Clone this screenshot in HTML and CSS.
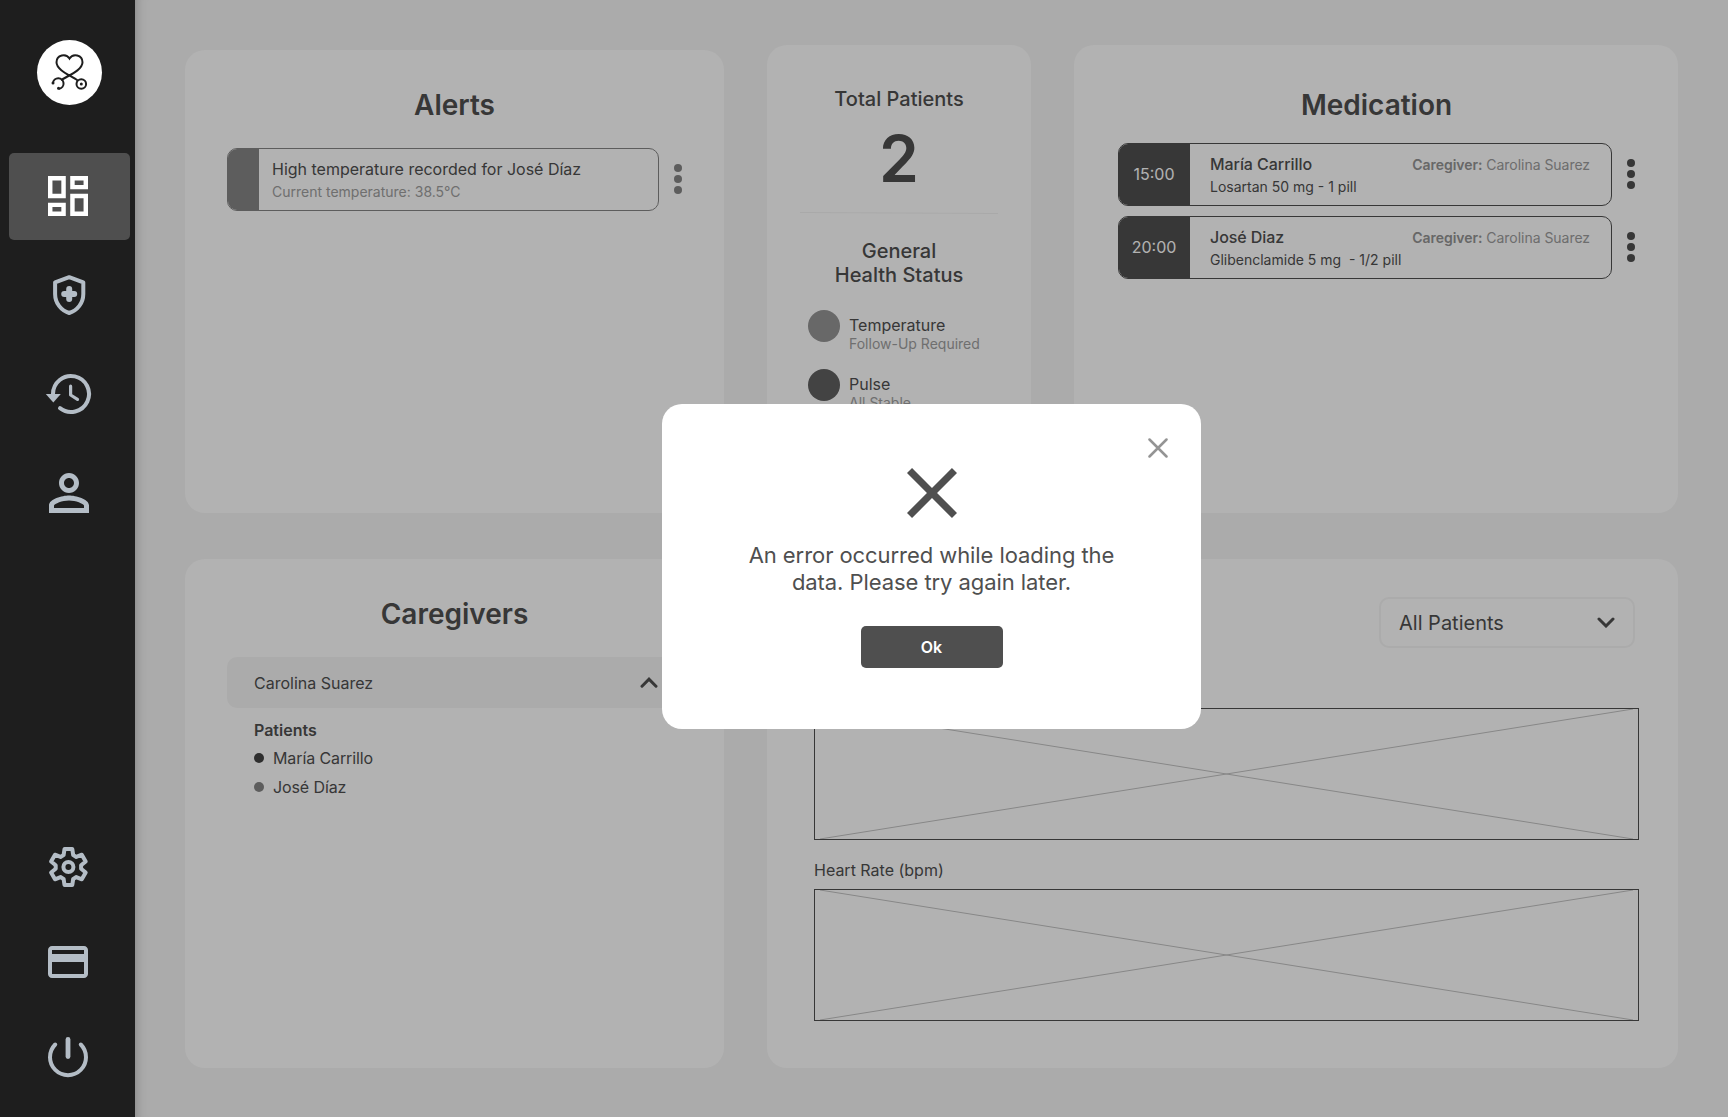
FILE: index.html
```html
<!DOCTYPE html>
<html lang="en">
<head>
<meta charset="utf-8">
<title>Dashboard</title>
<link rel="stylesheet" href="styles.css">
</head>
<body>
<div class="app">
  <aside class="sidebar">
    <div class="logo">
      <svg width="65" height="65" viewBox="0 0 65 65" fill="none" stroke="#1e1e1e" stroke-width="2" stroke-linecap="round">
        <path d="M24.800 39.800 C30 36 45.500 30.500 45.500 22.300 C45.500 14.500 35.800 13 32.500 18.600 C29.200 13 19.500 14.500 19.500 22.300 C19.500 30.500 35 36 40.300 40.200"/>
        <path d="M16 42.800 A5.300 5.300 0 1 1 22.300 48.700"/>
        <circle cx="44.300" cy="44" r="4.800"/>
        <circle cx="44.300" cy="44" r="1.500" fill="#1e1e1e" stroke="none"/>
        <circle cx="16" cy="43" r="1.500" fill="#1e1e1e" stroke="none"/>
        <circle cx="21.500" cy="48.300" r="1.500" fill="#1e1e1e" stroke="none"/>
      </svg>
    </div>
    <nav class="nav nav-main">
      <a class="nav-item active">
        <svg class="nav-icon" viewBox="0 0 50 40"><path transform="translate(4 0) scale(2.2222) translate(-3 -3)" d="M19 5v2h-4V5h4M9 5v6H5V5h4m10 8v6h-4v-6h4M9 17v2H5v-2h4M21 3h-8v6h8V3zM11 3H3v10h8V3zm10 8h-8v10h8V11zm-10 4H3v6h8v-6z"/></svg>
      </a>
      <a class="nav-item">
        <svg class="nav-icon line" viewBox="0 0 50 40"><path d="M25.200 2.200 L39.300 7.300 V19 C39.300 28 33.500 35.300 25.200 38 C16.900 35.300 11.100 28 11.100 19 V7.300 Z"/><path stroke-width="6" d="M25.200 14v10M20.200 19h10"/></svg>
      </a>
      <a class="nav-item">
        <svg class="nav-icon line" viewBox="0 0 50 40"><path d="M9 20 A18 18 0 1 1 16 34.200"/><path stroke-width="3.200" d="M26.600 12.200V21L33.500 25.300"/><path class="solid" d="M1.800 20h15l-7.500 8.500z"/></svg>
      </a>
      <a class="nav-item">
        <svg class="nav-icon" viewBox="0 0 50 40"><path transform="translate(5 0) scale(2.5) translate(-4 -4)" d="M12 6c1.100 0 2 .9 2 2s-.9 2-2 2-2-.9-2-2 .9-2 2-2m0 9c2.700 0 5.800 1.290 6 2v1H6v-.99c.2-.72 3.300-2.010 6-2.010m0-11C9.790 4 8 5.790 8 8s1.790 4 4 4 4-1.790 4-4-1.790-4-4-4zm0 9c-2.670 0-8 1.340-8 4v3h16v-3c0-2.660-5.330-4-8-4z"/></svg>
      </a>
    </nav>
    <nav class="nav nav-foot">
      <a class="nav-item">
        <svg class="nav-icon line" viewBox="-24.400 -20 50 40"><path d="M-4.800-11.900L-3.900-17.900H3.900L4.800-11.900L7.900-10.100L13.400-12.300L17.300-5.500L12.700-1.800V1.800L17.300 5.500L13.400 12.300L7.900 10.100L4.800 11.900L3.900 17.900H-3.900L-4.800 11.900L-7.900 10.100L-13.400 12.300L-17.300 5.500L-12.700 1.800V-1.800L-17.300-5.500L-13.400-12.300L-7.900-10.100Z"/><circle r="5"/></svg>
      </a>
      <a class="nav-item">
        <svg class="nav-icon" viewBox="0 0 50 40"><path transform="translate(4 4) scale(2) translate(-2 -4)" d="M20 4H4c-1.110 0-1.990.89-1.990 2L2 18c0 1.110.89 2 2 2h16c1.110 0 2-.89 2-2V6c0-1.110-.89-2-2-2zm0 14H4v-6h16v6zm0-10H4V6h16v2z"/></svg>
      </a>
      <a class="nav-item">
        <svg class="nav-icon line" viewBox="0 0 50 40"><path d="M11.200 7.500A18 18 0 1 0 36.800 7.500"/><path stroke-width="4.800" d="M24 2.400V19.600"/></svg>
      </a>
    </nav>
  </aside>

  <main class="content">
    <section class="card alerts">
      <h2>Alerts</h2>
      <div class="entry">
        <div class="box grey">
          <div class="tag"></div>
          <div class="box-body">
            <div class="line-main">High temperature recorded for José Díaz</div>
            <div class="line-sub muted">Current temperature: 38.5°C</div>
          </div>
        </div>
        <div class="dots grey"><i></i><i></i><i></i></div>
      </div>
    </section>

    <section class="card summary">
      <h3>Total Patients</h3>
      <div class="total">2</div>
      <svg class="divider" width="198" height="2" viewBox="0 0 198 2"><path d="M0 .5L198 1.500" stroke="#f3f3f3"/></svg>
      <h3>General<br>Health Status</h3>
      <ul class="status">
        <li><span class="status-dot follow"></span><div><div class="status-name">Temperature</div><div class="status-note">Follow-Up Required</div></div></li>
        <li><span class="status-dot stable"></span><div><div class="status-name">Pulse</div><div class="status-note">All Stable</div></div></li>
      </ul>
    </section>

    <section class="card medication">
      <h2>Medication</h2>
      <div class="entry">
        <div class="box">
          <div class="tag">15:00</div>
          <div class="box-body">
            <div class="line-top"><span class="name">María Carrillo</span><span class="caregiver"><b>Caregiver:</b> Carolina Suarez</span></div>
            <div class="line-sub">Losartan 50 mg - 1 pill</div>
          </div>
        </div>
        <div class="dots"><i></i><i></i><i></i></div>
      </div>
      <div class="entry">
        <div class="box">
          <div class="tag">20:00</div>
          <div class="box-body">
            <div class="line-top"><span class="name">José Diaz</span><span class="caregiver"><b>Caregiver:</b> Carolina Suarez</span></div>
            <div class="line-sub">Glibenclamide 5 mg&nbsp; - 1/2 pill</div>
          </div>
        </div>
        <div class="dots"><i></i><i></i><i></i></div>
      </div>
    </section>

    <section class="card caregivers">
      <h2>Caregivers</h2>
      <div class="accordion">
        <span>Carolina Suarez</span>
        <svg class="chevron" width="18" height="11" viewBox="0 0 18 11"><path d="M2 9.200L9 2.200L16 9.200"/></svg>
      </div>
      <div class="patients">
        <h4>Patients</h4>
        <div class="patient"><i class="bullet dark"></i>María Carrillo</div>
        <div class="patient"><i class="bullet"></i>José Díaz</div>
      </div>
    </section>

    <section class="card trends">
      <div class="select">
        <span>All Patients</span>
        <svg class="chevron" width="18" height="11" viewBox="0 0 18 11"><path d="M2 2L9 9L16 2"/></svg>
      </div>
      <svg class="chart" viewBox="0 0 825 132"><path class="cross" d="M6 1L819 131M6 131L819 1"/><rect x=".5" y=".5" width="824" height="131"/></svg>
      <div class="chart-label">Heart Rate (bpm)</div>
      <svg class="chart" viewBox="0 0 825 132"><path class="cross" d="M6 1L819 131M6 131L819 1"/><rect x=".5" y=".5" width="824" height="131"/></svg>
    </section>
  </main>
</div>

<div class="backdrop">
  <div class="modal" role="alertdialog">
    <svg class="close" width="20" height="20" viewBox="0 0 20 20"><path d="M1.500 1.500L18.500 18.500M18.500 1.500L1.500 18.500"/></svg>
    <svg class="error-icon" width="50" height="50" viewBox="0 0 14 14"><path d="M14 1.410L12.590 0L7 5.590L1.410 0L0 1.410L5.590 7L0 12.590L1.410 14L7 8.410L12.590 14L14 12.590L8.410 7z"/></svg>
    <p>An error occurred while loading the<br>data. Please try again later.</p>
    <button>Ok</button>
  </div>
</div>
</body>
</html>
```
FILE: styles.css
```css
* { box-sizing: border-box; }
body {
  margin: 0;
  background: #f5f5f5;
  font-family: Inter, "Liberation Sans", sans-serif;
  font-size: 16px;
  line-height: 20px;
  color: #4f4f4f;
}
h2, h3, h4, p, ul { margin: 0; padding: 0; }
.app { display: flex; width: 1728px; height: 1117px; overflow: hidden; }

.sidebar {
  position: relative;
  z-index: 3;
  width: 135px;
  flex: none;
  display: flex;
  flex-direction: column;
  padding: 40px 5px 16px 9px;
  background: #1e1e1e;
}
.logo {
  width: 65px;
  height: 65px;
  margin-left: 28px;
  border-radius: 50%;
  background: #fff;
}
.logo svg { display: block; }
.nav { display: flex; flex-direction: column; }
.nav-main { margin-top: 48px; gap: 12px; }
.nav-foot { margin-top: auto; gap: 8px; }
.nav-item {
  display: flex;
  align-items: center;
  height: 87px;
  padding: 0 0 1px 35px;
  border-radius: 5px;
  color: #b4bdc6;
}
.nav-item.active { background: #4f4f4f; color: #fff; }
.nav-icon { width: 50px; height: 40px; fill: currentColor; overflow: visible; }
.nav-icon.line {
  fill: none;
  stroke: currentColor;
  stroke-width: 4;
  stroke-linecap: round;
  stroke-linejoin: round;
}
.nav-icon .solid { fill: currentColor; stroke: none; }

.content {
  flex: 1;
  display: grid;
  grid-template-columns: 539px 264px 604px;
  grid-template-rows: 468px 509px;
  gap: 46px 43px;
  padding: 45px 50px 49px;
  box-shadow: inset 12px 0 12px -12px rgba(0, 0, 0, .28);
}
.card { background: #fff; border-radius: 20px; }
h2 {
  font-size: 28px;
  line-height: 34px;
  font-weight: 600;
  text-align: center;
}
h3 { font-size: 20px; line-height: 24px; font-weight: 500; text-align: center; }

.alerts { margin-top: 5px; padding: 38px 42px 0; }
.alerts h2 { margin-bottom: 26px; }
.medication { padding: 43px 43px 0 44px; }
.medication h2 { margin-bottom: 21px; }

.entry { display: flex; align-items: center; }
.entry + .entry { margin-top: 10px; }
.box {
  display: flex;
  height: 63px;
  border: 1px solid #4f4f4f;
  border-radius: 10px;
  overflow: hidden;
}
.box.grey { border-color: #868686; }
.alerts .box { width: 432px; }
.medication .box { width: 494px; }
.tag {
  width: 71px;
  flex: none;
  display: flex;
  align-items: center;
  justify-content: center;
  padding: 0 1px 1px 0;
  background: #4f4f4f;
  color: #fff;
}
.grey .tag { width: 31px; background: #868686; }
.box-body { flex: 1; padding: 10px 21px 0 20px; white-space: nowrap; }
.grey .box-body { padding-left: 13px; }
.line-top { display: flex; justify-content: space-between; align-items: baseline; }
.name { font-weight: 500; letter-spacing: -.06px; }
.line-sub { margin-top: 3px; font-size: 14px; line-height: 18px; }
.grey .line-sub { margin-top: 4px; }
.muted { color: #a0a0a0; }
.caregiver { font-size: 14px; line-height: 20px; letter-spacing: -.04px; color: #9c9c9c; }
.caregiver b { font-weight: 600; color: #949494; }
.dots { display: flex; flex-direction: column; gap: 3.300px; margin: 0 0 1px 15px; }
.dots i { width: 8px; height: 8px; border-radius: 50%; background: #4f4f4f; }
.dots.grey i { background: #868686; }

.summary { display: flex; flex-direction: column; align-items: center; padding-top: 42px; }
.total { margin-top: 9px; font-size: 64px; line-height: 78px; font-weight: 600; }
.divider { margin: 14px 0 25px; }
.status { align-self: stretch; list-style: none; margin-top: 23px; padding-left: 41px; }
.status li { display: flex; gap: 9px; height: 59px; }
.status-dot { width: 32px; height: 32px; border-radius: 50%; }
.follow { background: #959595; }
.stable { background: #616161; }
.status-name { margin-top: 5px; }
.status-note { font-size: 14px; line-height: 18px; color: #a0a0a0; }

.caregivers { padding: 38px 42px 0; }
.caregivers h2 { margin-bottom: 26px; }
.accordion {
  display: flex;
  align-items: center;
  justify-content: space-between;
  height: 51px;
  padding: 0 24px 0 27px;
  border-radius: 10px;
  background: #f5f5f5;
}
.chevron { fill: none; stroke: #4f4f4f; stroke-width: 3; stroke-linecap: round; stroke-linejoin: miter; }
.patients { padding: 12px 0 0 27px; }
h4 { font-size: 16px; line-height: 20px; font-weight: 600; }
.patient { display: flex; align-items: center; gap: 9px; margin-top: 8px; letter-spacing: -.1px; }
.patient + .patient { margin-top: 9px; }
.bullet { width: 10px; height: 10px; border-radius: 50%; background: #868686; }
.bullet.dark { background: #434343; }

.trends { grid-column: 2 / 4; padding: 38px 39px 0 47px; }
.select {
  display: flex;
  align-items: center;
  justify-content: space-between;
  width: 256px;
  height: 51px;
  margin: 0 4px 60px auto;
  padding: 0 18px;
  border: 2px solid #f5f5f5;
  border-radius: 10px;
  font-size: 20px;
}
.chart { display: block; width: 825px; height: 132px; }
.chart rect { fill: none; stroke: #4f4f4f; }
.chart .cross { stroke: #c2c2c2; }
.chart-label { margin: 20px 0 9px; }

.backdrop {
  position: fixed;
  inset: 0;
  z-index: 2;
  padding: 404px 0 0 662px;
  background: rgba(0, 0, 0, .3);
}
.modal {
  position: relative;
  display: flex;
  flex-direction: column;
  align-items: center;
  width: 539px;
  height: 325px;
  padding-top: 64px;
  border-radius: 20px;
  background: #fff;
}
.close {
  position: absolute;
  top: 34px;
  right: 33px;
  stroke: #949494;
  stroke-width: 2.500;
  stroke-linecap: round;
}
.error-icon { fill: #4f4f4f; }
.modal p {
  margin: 24px 0 30px;
  font-size: 22px;
  line-height: 27px;
  letter-spacing: -.07px;
  text-align: center;
}
.modal button {
  width: 142px;
  height: 42px;
  border: 0;
  border-radius: 5px;
  background: #4f4f4f;
  color: #fff;
  font: 600 16px/20px Inter, "Liberation Sans", sans-serif;
}
```
